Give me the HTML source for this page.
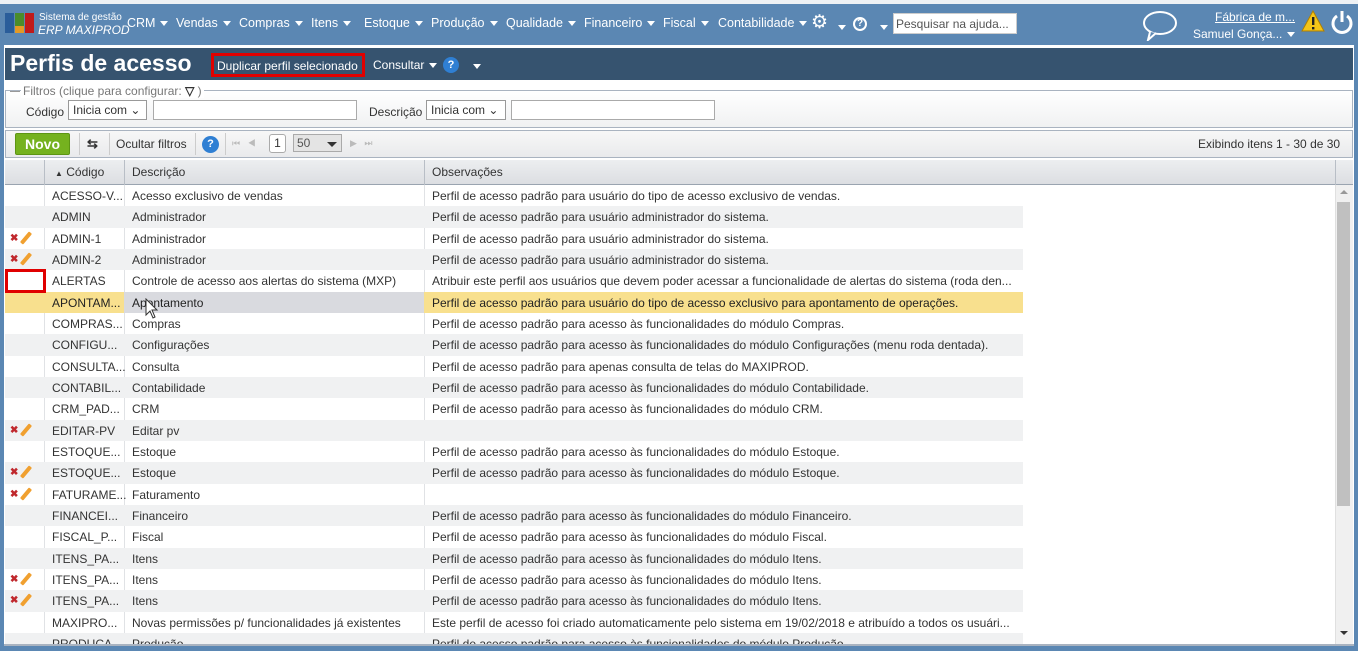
<!DOCTYPE html>
<html><head><meta charset="utf-8"><style>
*{box-sizing:border-box;margin:0;padding:0}
body{width:1358px;height:651px;overflow:hidden;background:#dfe6ee;font-family:"Liberation Sans",Arial,sans-serif;font-size:12px;color:#333;position:relative}
.a{position:absolute;white-space:nowrap}
#top{left:0;top:4px;width:1358px;height:41px;background:#5b87b3}
.menu{top:16px;color:#fff;font-size:12.5px}
.tri{display:inline-block;width:0;height:0;border-left:4px solid transparent;border-right:4px solid transparent;border-top:5px solid #fff;vertical-align:middle;margin-left:5px}
#frame{left:0;top:45px;width:1358px;height:606px;background:#5b87b3}
#inner{left:4px;top:45px;width:1350px;height:601px;background:#fff}
.row{position:absolute;left:5px;width:1330px;height:21.33px}
.c{position:absolute;top:4px;font-size:12px;color:#333}
.x{position:absolute;left:5px;top:5px;color:#c0282d;font-size:10px;font-weight:bold}
.p{position:absolute;left:19px;top:3px;width:4px;height:14px;background:#f0a030;transform:rotate(40deg);border-radius:1px}
</style></head><body>
<div class="a" id="top"></div>
<div class="a" style="left:0;top:0;width:1358px;height:4px;background:#eef1f4"></div>
<div class="a" style="left:5px;top:13px;width:9px;height:20px;background:#2a5d9a"></div>
<div class="a" style="left:15px;top:13px;width:9px;height:13px;background:#4a8c2a"></div>
<div class="a" style="left:15px;top:26px;width:9px;height:7px;background:#e39a25"></div>
<div class="a" style="left:25px;top:13px;width:9px;height:20px;background:#c01a1a"></div>
<div class="a" style="left:39px;top:12px;color:#fff;font-size:10px">Sistema de gestão</div>
<div class="a" style="left:38px;top:23px;color:#fff;font-size:12px;font-style:italic">ERP MAXIPROD</div>
<div class="a menu" style="left:127px">CRM<span class="tri"></span></div>
<div class="a menu" style="left:176px">Vendas<span class="tri"></span></div>
<div class="a menu" style="left:239px">Compras<span class="tri"></span></div>
<div class="a menu" style="left:311px">Itens<span class="tri"></span></div>
<div class="a menu" style="left:364px">Estoque<span class="tri"></span></div>
<div class="a menu" style="left:431px">Produção<span class="tri"></span></div>
<div class="a menu" style="left:506px">Qualidade<span class="tri"></span></div>
<div class="a menu" style="left:584px">Financeiro<span class="tri"></span></div>
<div class="a menu" style="left:663px">Fiscal<span class="tri"></span></div>
<div class="a menu" style="left:718px">Contabilidade<span class="tri"></span></div>
<div class="a" style="left:811px;top:13px;color:#fff;font-size:19px;line-height:20px">⚙</div>
<div class="a" style="left:833px;top:20px"><span class="tri"></span></div>
<div class="a" style="left:853px;top:17px;width:14px;height:14px;border:2px solid #fff;border-radius:50%;color:#fff;font-size:10px;font-weight:bold;text-align:center;line-height:10px">?</div>
<div class="a" style="left:875px;top:20px"><span class="tri"></span></div>
<div class="a" style="left:893px;top:13px;width:124px;height:21px;background:#fff;border:1px solid #ccc;color:#555;font-size:12px;padding:3px 2px">Pesquisar na ajuda...</div>
<svg class="a" style="left:1142px;top:9px" width="36" height="32"><ellipse cx="18" cy="14" rx="16" ry="11" fill="none" stroke="#fff" stroke-width="2"/><path d="M8 23 L6 31 L14 24" fill="#5b87b3" stroke="#fff" stroke-width="2"/></svg>
<div class="a" style="left:1215px;top:10px;color:#fff;font-size:12px;text-decoration:underline">Fábrica de m...</div>
<div class="a" style="left:1193px;top:27px;color:#fff;font-size:12px">Samuel Gonça...<span class="tri"></span></div>
<svg class="a" style="left:1301px;top:10px" width="24" height="22"><path d="M12 1 L23 21 L1 21Z" fill="#f5c518" stroke="#b08000"/><rect x="11" y="7" width="2.4" height="8" fill="#222"/><rect x="11" y="17" width="2.4" height="2.4" fill="#222"/></svg>
<svg class="a" style="left:1330px;top:9px" width="24" height="26"><path d="M7 7 A9 9 0 1 0 17 7" fill="none" stroke="#fff" stroke-width="3"/><path d="M12 2 V13" stroke="#fff" stroke-width="3"/></svg>

<div class="a" id="frame"></div>
<div class="a" id="inner"></div>
<div class="a" style="left:5px;top:48px;width:1348px;height:32px;background:#36536f"></div>
<div class="a" style="left:10px;top:50px;color:#fff;font-size:23px;font-weight:bold">Perfis de acesso</div>
<div class="a" style="left:211px;top:53px;width:154px;height:24px;border:3px solid #e00000;color:#fff;font-size:12px;padding:3px 3px">Duplicar perfil selecionado</div>
<div class="a" style="left:373px;top:58px;color:#fff;font-size:12px">Consultar<span class="tri"></span></div>
<div class="a" style="left:443px;top:57px;width:16px;height:16px;border-radius:50%;background:#2f7fd3;color:#fff;font-size:11px;font-weight:bold;text-align:center;line-height:16px">?</div>
<div class="a" style="left:468px;top:59px"><span class="tri"></span></div>
<div class="a" style="left:5px;top:90px;width:1348px;height:38px;border:1px solid #a9b3c0;background:linear-gradient(#fff,#f0f1f2)"></div>
<div class="a" style="left:10px;top:91px;width:10px;border-top:1px solid #999"></div>
<div class="a" style="left:21px;top:84px;color:#777;font-size:12px;background:#fff;padding:0 2px">Filtros (clique para configurar: <b style="color:#333">▽</b> )</div>
<div class="a" style="left:26px;top:105px;font-size:12px;color:#333">Código</div>
<div class="a" style="left:68px;top:100px;width:79px;height:20px;border:1px solid #999;background:#fff;padding:2px 4px;font-size:12px">Inicia com ⌄</div>
<div class="a" style="left:153px;top:100px;width:204px;height:20px;border:1px solid #aaa;background:#fff"></div>
<div class="a" style="left:369px;top:105px;font-size:12px">Descrição</div>
<div class="a" style="left:426px;top:100px;width:80px;height:20px;border:1px solid #999;background:#fff;padding:2px 4px;font-size:12px">Inicia com ⌄</div>
<div class="a" style="left:511px;top:100px;width:204px;height:20px;border:1px solid #aaa;background:#fff"></div>
<div class="a" style="left:5px;top:130px;width:1348px;height:28px;border:1px solid #a9b3c0;background:linear-gradient(#f7f7f7,#e9eaec)"></div>
<div class="a" style="left:15px;top:133px;width:55px;height:22px;background:#75b21f;border:1px solid #5d9514;border-radius:2px;color:#fff;font-weight:bold;font-size:14px;text-align:center;line-height:20px">Novo</div>
<div class="a" style="left:79px;top:133px;height:22px;border-left:1px solid #ccc"></div>
<div class="a" style="left:87px;top:136px;font-size:13px;font-weight:bold">⇆</div>
<div class="a" style="left:109px;top:133px;height:22px;border-left:1px solid #ccc"></div>
<div class="a" style="left:116px;top:137px;font-size:12px">Ocultar filtros</div>
<div class="a" style="left:195px;top:133px;height:22px;border-left:1px solid #ccc"></div>
<div class="a" style="left:202px;top:136px;width:17px;height:17px;border-radius:50%;background:#2f7fd3;color:#fff;font-size:11px;font-weight:bold;text-align:center;line-height:17px">?</div>
<div class="a" style="left:225px;top:133px;height:22px;border-left:1px solid #ccc"></div>
<div class="a" style="left:232px;top:138px;color:#bbb;font-size:9px">⏮&nbsp;&nbsp;&nbsp;◀</div>
<div class="a" style="left:269px;top:134px;width:17px;height:19px;border:1px solid #aaa;border-radius:3px;background:#fff;text-align:center;line-height:17px">1</div>
<div class="a" style="left:293px;top:134px;width:49px;height:18px;border:1px solid #aaa;background:#e4e4e4;padding:1px 3px;color:#555">50 <span style="position:absolute;right:4px;top:7px;border-left:5px solid transparent;border-right:5px solid transparent;border-top:5px solid #333"></span></div>
<div class="a" style="left:350px;top:138px;color:#bbb;font-size:9px">▶&nbsp;&nbsp;&nbsp;⏭</div>
<div class="a" style="left:1198px;top:137px;font-size:12px">Exibindo itens 1 - 30 de 30</div>
<div class="a" style="left:5px;top:160px;width:1348px;height:25px;background:linear-gradient(#eceef0,#dcdee2);border-bottom:1px solid #9aa4b0"></div>
<div class="a" style="left:44px;top:160px;height:25px;border-left:1px solid #b8bec6"></div>
<div class="a" style="left:124px;top:160px;height:25px;border-left:1px solid #b8bec6"></div>
<div class="a" style="left:424px;top:160px;height:25px;border-left:1px solid #b8bec6"></div>
<div class="a" style="left:1335px;top:160px;height:25px;border-left:1px solid #b8bec6"></div>
<div class="a" style="left:55px;top:165px;font-size:12px"><span style="font-size:8px">▲</span> Código</div>
<div class="a" style="left:132px;top:165px;font-size:12px">Descrição</div>
<div class="a" style="left:432px;top:165px;font-size:12px">Observações</div>
<div class="a" style="left:5px;top:185px;width:1330px;height:460px;overflow:hidden">
<div style="position:absolute;left:39px;top:0;height:460px;border-left:1px solid #e0e2e5"></div>
<div style="position:absolute;left:119px;top:0;height:460px;border-left:1px solid #e0e2e5"></div>
<div style="position:absolute;left:419px;top:0;height:460px;border-left:1px solid #e0e2e5"></div>
</div>
<div class="a" id="rows" style="left:0;top:185px;width:1335px;height:460px;overflow:hidden">
<div class="row" style="top:0"><span class="c" style="left:47px">ACESSO-V...</span><span class="c" style="left:127px">Acesso exclusivo de vendas</span><span class="c" style="left:427px">Perfil de acesso padrão para usuário do tipo de acesso exclusivo de vendas.</span></div>
<div class="row" style="top:21.33px;background:#f0f1f2;width:1018px"><span class="c" style="left:47px">ADMIN</span><span class="c" style="left:127px">Administrador</span><span class="c" style="left:427px">Perfil de acesso padrão para usuário administrador do sistema.</span></div>
<div class="row" style="top:42.66px"><span class="x">✖</span><span class="p"></span><span class="c" style="left:47px">ADMIN-1</span><span class="c" style="left:127px">Administrador</span><span class="c" style="left:427px">Perfil de acesso padrão para usuário administrador do sistema.</span></div>
<div class="row" style="top:64px;background:#f0f1f2;width:1018px"><span class="x">✖</span><span class="p"></span><span class="c" style="left:47px">ADMIN-2</span><span class="c" style="left:127px">Administrador</span><span class="c" style="left:427px">Perfil de acesso padrão para usuário administrador do sistema.</span></div>
<div class="row" style="top:85.33px"><span class="c" style="left:47px">ALERTAS</span><span class="c" style="left:127px">Controle de acesso aos alertas do sistema (MXP)</span><span class="c" style="left:427px">Atribuir este perfil aos usuários que devem poder acessar a funcionalidade de alertas do sistema (roda den...</span></div>
<div class="row" style="top:106.66px;background:#f8e08e;width:1018px"><div style="position:absolute;left:119px;top:0;width:300px;height:21.33px;background:#d9dadf"></div><span class="c" style="left:47px;color:#222">APONTAM...</span><span class="c" style="left:127px;color:#222">Apontamento</span><span class="c" style="left:427px;color:#222">Perfil de acesso padrão para usuário do tipo de acesso exclusivo para apontamento de operações.</span></div>
<div class="row" style="top:128px"><span class="c" style="left:47px">COMPRAS...</span><span class="c" style="left:127px">Compras</span><span class="c" style="left:427px">Perfil de acesso padrão para acesso às funcionalidades do módulo Compras.</span></div>
<div class="row" style="top:149.33px;background:#f0f1f2;width:1018px"><span class="c" style="left:47px">CONFIGU...</span><span class="c" style="left:127px">Configurações</span><span class="c" style="left:427px">Perfil de acesso padrão para acesso às funcionalidades do módulo Configurações (menu roda dentada).</span></div>
<div class="row" style="top:170.66px"><span class="c" style="left:47px">CONSULTA...</span><span class="c" style="left:127px">Consulta</span><span class="c" style="left:427px">Perfil de acesso padrão para apenas consulta de telas do MAXIPROD.</span></div>
<div class="row" style="top:192px;background:#f0f1f2;width:1018px"><span class="c" style="left:47px">CONTABIL...</span><span class="c" style="left:127px">Contabilidade</span><span class="c" style="left:427px">Perfil de acesso padrão para acesso às funcionalidades do módulo Contabilidade.</span></div>
<div class="row" style="top:213.33px"><span class="c" style="left:47px">CRM_PAD...</span><span class="c" style="left:127px">CRM</span><span class="c" style="left:427px">Perfil de acesso padrão para acesso às funcionalidades do módulo CRM.</span></div>
<div class="row" style="top:234.66px;background:#f0f1f2;width:1018px"><span class="x">✖</span><span class="p"></span><span class="c" style="left:47px">EDITAR-PV</span><span class="c" style="left:127px">Editar pv</span></div>
<div class="row" style="top:256px"><span class="c" style="left:47px">ESTOQUE...</span><span class="c" style="left:127px">Estoque</span><span class="c" style="left:427px">Perfil de acesso padrão para acesso às funcionalidades do módulo Estoque.</span></div>
<div class="row" style="top:277.33px;background:#f0f1f2;width:1018px"><span class="x">✖</span><span class="p"></span><span class="c" style="left:47px">ESTOQUE...</span><span class="c" style="left:127px">Estoque</span><span class="c" style="left:427px">Perfil de acesso padrão para acesso às funcionalidades do módulo Estoque.</span></div>
<div class="row" style="top:298.66px"><span class="x">✖</span><span class="p"></span><span class="c" style="left:47px">FATURAME...</span><span class="c" style="left:127px">Faturamento</span></div>
<div class="row" style="top:320px;background:#f0f1f2;width:1018px"><span class="c" style="left:47px">FINANCEI...</span><span class="c" style="left:127px">Financeiro</span><span class="c" style="left:427px">Perfil de acesso padrão para acesso às funcionalidades do módulo Financeiro.</span></div>
<div class="row" style="top:341.33px"><span class="c" style="left:47px">FISCAL_P...</span><span class="c" style="left:127px">Fiscal</span><span class="c" style="left:427px">Perfil de acesso padrão para acesso às funcionalidades do módulo Fiscal.</span></div>
<div class="row" style="top:362.66px;background:#f0f1f2;width:1018px"><span class="c" style="left:47px">ITENS_PA...</span><span class="c" style="left:127px">Itens</span><span class="c" style="left:427px">Perfil de acesso padrão para acesso às funcionalidades do módulo Itens.</span></div>
<div class="row" style="top:384px"><span class="x">✖</span><span class="p"></span><span class="c" style="left:47px">ITENS_PA...</span><span class="c" style="left:127px">Itens</span><span class="c" style="left:427px">Perfil de acesso padrão para acesso às funcionalidades do módulo Itens.</span></div>
<div class="row" style="top:405.33px;background:#f0f1f2;width:1018px"><span class="x">✖</span><span class="p"></span><span class="c" style="left:47px">ITENS_PA...</span><span class="c" style="left:127px">Itens</span><span class="c" style="left:427px">Perfil de acesso padrão para acesso às funcionalidades do módulo Itens.</span></div>
<div class="row" style="top:426.66px"><span class="c" style="left:47px">MAXIPRO...</span><span class="c" style="left:127px">Novas permissões p/ funcionalidades já existentes</span><span class="c" style="left:427px">Este perfil de acesso foi criado automaticamente pelo sistema em 19/02/2018 e atribuído a todos os usuári...</span></div>
<div class="row" style="top:448px;background:#f0f1f2;width:1018px"><span class="c" style="left:47px">PRODUCA...</span><span class="c" style="left:127px">Produção</span><span class="c" style="left:427px">Perfil de acesso padrão para acesso às funcionalidades do módulo Produção.</span></div>
</div>
<div class="a" style="left:5px;top:269px;width:41px;height:24px;border:3px solid #e00000"></div>
<svg class="a" style="left:145px;top:298px" width="14" height="22"><path d="M1 1 L1 17 L5 13 L8 20 L10 19 L7 12 L12 12Z" fill="#fff" stroke="#333"/></svg>
<div class="a" style="left:1335px;top:185px;width:18px;height:460px;background:#f0f0f0;border-left:1px solid #e0e0e0"></div>
<div class="a" style="left:1340px;top:190px;border-left:4px solid transparent;border-right:4px solid transparent;border-bottom:4px solid #999"></div>
<div class="a" style="left:1337px;top:202px;width:13px;height:304px;background:#c0c0c0"></div>
<div class="a" style="left:1340px;top:631px;border-left:4px solid transparent;border-right:4px solid transparent;border-top:4px solid #333"></div>
<div class="a" style="left:4px;top:644px;width:1350px;height:2px;background:#a9b3c0"></div>
</body></html>
